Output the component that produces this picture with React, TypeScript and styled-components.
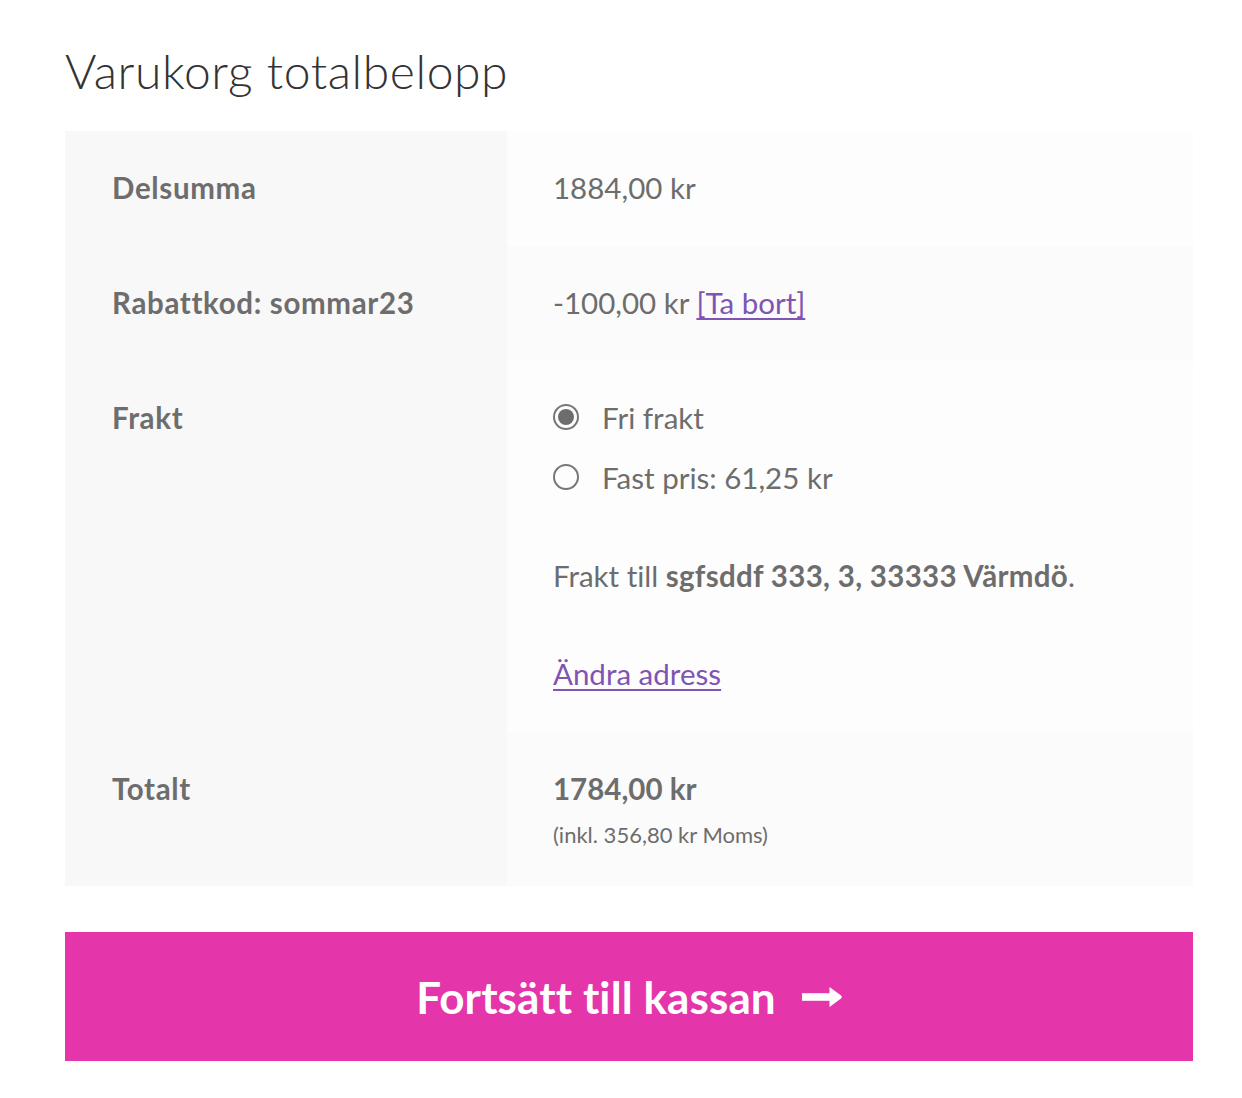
import React from "react";
import styled, { createGlobalStyle } from "styled-components";

const Global = createGlobalStyle`
  html, body { margin: 0; padding: 0; background: #ffffff; }
  body {
    font-family: Lato, "Liberation Sans", sans-serif;
    color: #6d6d6d;
    font-variant-ligatures: no-common-ligatures;
    -webkit-font-smoothing: antialiased;
  }
  * { box-sizing: border-box; }
`;

const Page = styled.div`
  width: 1242px;
  padding: 43px 49px 37px 65px;
`;

const Title = styled.h2`
  margin: 0 0 32px;
  font-size: 48px;
  line-height: 56px;
  font-weight: 300;
  color: #333333;
  letter-spacing: 0.6px;
`;

const Table = styled.div`
  display: grid;
  grid-template-columns: 442px 1fr;
  width: 1128px;
`;

const Th = styled.div`
  background: #f8f8f8;
  padding: 33px 47px 34px;
  font-size: 29.5px;
  line-height: 48px;
  font-weight: 700;
  letter-spacing: 0.65px;
  color: #6d6d6d;
`;

const Td = styled.div<{ $alt?: boolean }>`
  background: ${(p) => (p.$alt ? "#fbfbfb" : "#fdfdfd")};
  padding: 33px 46px 34px;
  font-size: 29.5px;
  line-height: 48px;
  font-weight: 400;
  color: #6d6d6d;
`;

const Link = styled.a`
  color: #7f54b3;
  text-decoration: underline;
  text-decoration-thickness: 2px;
  text-underline-offset: 4px;
  cursor: pointer;
`;

const MethodList = styled.ul`
  list-style: none;
  margin: 0;
  padding: 0;
  display: flex;
  flex-direction: column;
  gap: 12px;
`;

const Method = styled.li`
  display: flex;
  align-items: center;
  gap: 23px;
`;

const Radio = styled.span<{ $checked?: boolean }>`
  position: relative;
  flex: none;
  width: 26px;
  height: 26px;
  border-radius: 50%;
  border: 2px solid #777777;
  margin-top: -3px;
  &::after {
    content: "";
    position: absolute;
    inset: 3px;
    border-radius: 50%;
    background: #6d6d6d;
    display: ${(p) => (p.$checked ? "block" : "none")};
  }
`;

const Para = styled.p`
  margin: 50px 0 0;
`;

const Strong = styled.strong`
  font-weight: 700;
  letter-spacing: 0.3px;
`;

const Amount = styled.strong`
  font-weight: 700;
`;

const TaxNote = styled.small`
  display: block;
  margin-top: 5px;
  font-size: 22px;
  line-height: 34px;
`;

const CheckoutButton = styled.a`
  margin-top: 46px;
  width: 1128px;
  height: 129px;
  background: #e535ab;
  color: #ffffff;
  display: flex;
  align-items: center;
  justify-content: center;
  gap: 26px;
  font-size: 44px;
  font-weight: 700;
  letter-spacing: 0.1px;
  text-decoration: none;
  cursor: pointer;
`;

const Arrow = () => (
  <svg width="40" height="20" viewBox="0 0 40 20" aria-hidden="true">
    <rect x="0" y="6.2" width="29" height="7.6" fill="#ffffff" />
    <path d="M27.5 0 L39 8.6 Q40.6 10 39 11.4 L27.5 20 Z" fill="#ffffff" />
  </svg>
);

export default function App() {
  return (
    <>
      <Global />
      <Page>
        <Title>Varukorg totalbelopp</Title>
        <Table>
          <Th>Delsumma</Th>
          <Td>1884,00 kr</Td>

          <Th>Rabattkod: sommar23</Th>
          <Td $alt>
            -100,00 kr <Link>[Ta bort]</Link>
          </Td>

          <Th>Frakt</Th>
          <Td>
            <MethodList>
              <Method>
                <Radio $checked />
                <span>Fri frakt</span>
              </Method>
              <Method>
                <Radio />
                <span>Fast pris: 61,25 kr</span>
              </Method>
            </MethodList>
            <Para>
              Frakt till <Strong>sgfsddf 333, 3, 33333 Värmdö</Strong>.
            </Para>
            <Para>
              <Link>Ändra adress</Link>
            </Para>
          </Td>

          <Th>Totalt</Th>
          <Td $alt>
            <Amount>1784,00 kr</Amount>
            <TaxNote>(inkl. 356,80 kr Moms)</TaxNote>
          </Td>
        </Table>
        <CheckoutButton>
          <span>Fortsätt till kassan</span>
          <Arrow />
        </CheckoutButton>
      </Page>
    </>
  );
}
